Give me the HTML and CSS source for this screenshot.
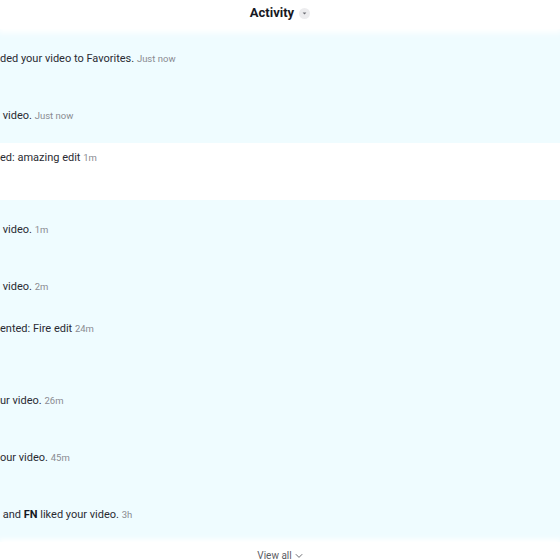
FILE: index.html
```html
<!DOCTYPE html>
<html lang="en">

<head>
  <meta charset="UTF-8">
  <meta name="viewport" content="width=device-width, initial-scale=1.0">
  <title>Activity</title>
  <link rel="stylesheet" href="styles.css">
</head>

<body>
  <section class="panel">
    <header class="panel-header">
      <h1 class="panel-title">Activity</h1>
      <span class="panel-toggle">
        <svg viewBox="0 0 11 11" width="11" height="11">
          <circle cx="5.5" cy="5.5" r="5.5" fill="#ececee"></circle>
          <path d="M3.6 4.5 L7.4 4.5 L5.5 6.6 Z" fill="#6d6e75"></path>
        </svg>
      </span>
    </header>

    <ul class="activity-list">
      <li class="activity unread">
        <p class="msg">ded your video to Favorites. <span class="time">Just now</span></p>
      </li>
      <li class="activity unread">
        <p class="msg">&nbsp;video. <span class="time">Just now</span></p>
      </li>
      <li class="activity comment">
        <p class="msg">ed: amazing edit <span class="time">1m</span></p>
      </li>
      <li class="activity unread">
        <p class="msg">&nbsp;video. <span class="time">1m</span></p>
      </li>
      <li class="activity unread">
        <p class="msg">&nbsp;video. <span class="time">2m</span></p>
      </li>
      <li class="activity unread comment">
        <p class="msg">ented: Fire edit <span class="time">24m</span></p>
      </li>
      <li class="activity unread">
        <p class="msg">ur video. <span class="time">26m</span></p>
      </li>
      <li class="activity unread">
        <p class="msg">our video. <span class="time">45m</span></p>
      </li>
      <li class="activity unread">
        <p class="msg">&nbsp;and <b>FN</b> liked your video. <span class="time">3h</span></p>
      </li>
    </ul>

    <footer class="panel-footer">
      <button class="view-all">View all
        <svg viewBox="0 0 8 6" width="8" height="6">
          <path d="M0.8 1.2 L4 4.4 L7.2 1.2" fill="none" stroke="#5c5d63" stroke-width="0.9"></path>
        </svg>
      </button>
    </footer>
  </section>
</body>

</html>
```

FILE: styles.css
```css
html {
  box-sizing: border-box;
  font-family: Roboto, "Liberation Sans", sans-serif;
  font-size: 11px;
}

*,
*::before,
*::after {
  box-sizing: border-box;
}

body {
  margin: 0;
  background-color: #fff;
  color: #161823;
}

.panel {
  display: flex;
  flex-direction: column;
  width: 560px;
  height: 560px;
  overflow: hidden;
}

.panel > * {
  flex-shrink: 0;
}

.panel-header {
  position: relative;
  z-index: 1;
  display: flex;
  justify-content: center;
  align-items: flex-start;
  gap: 5px;
  height: 29px;
  padding-top: 4px;
  background-color: #fff;
  box-shadow: 0 2px 6px 2px #fff;
}

.panel-title {
  margin: 0;
  font-size: 13px;
  line-height: 18px;
  font-weight: 700;
}

.panel-toggle {
  display: flex;
  padding-top: 4px;
}

.activity-list {
  margin: 0;
  padding: 0;
  list-style: none;
}

.activity {
  display: flex;
  align-items: center;
  height: 57px;
  overflow: hidden;
  white-space: nowrap;
}

.activity.unread {
  background-color: #effcff;
}

.activity.comment {
  align-items: flex-start;
  padding-top: 6px;
}

.msg {
  margin: 0;
  padding-top: 2px;
  line-height: 14px;
  color: #2a2b33;
}

.msg b {
  font-weight: 700;
  color: #161823;
}

.time {
  font-size: 9.5px;
  color: #8a8b91;
}

.panel-footer {
  position: relative;
  display: flex;
  justify-content: center;
  padding-top: 7px;
  background-color: #fff;
  box-shadow: 0 -2px 5px 1px #fff;
}

.view-all {
  display: flex;
  align-items: center;
  gap: 3px;
  padding: 0;
  border: none;
  background: none;
  font-family: inherit;
  font-size: 10px;
  line-height: 14px;
  color: #5c5d63;
  cursor: pointer;
}
```
